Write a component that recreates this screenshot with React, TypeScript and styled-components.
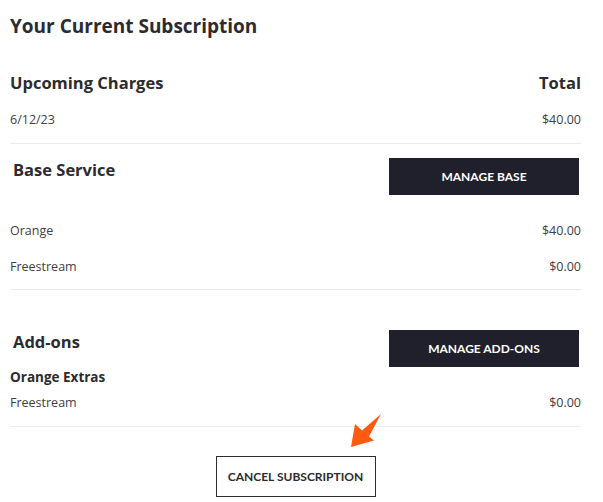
import React from "react";
import styled, { createGlobalStyle } from "styled-components";

const Global = createGlobalStyle`
  html, body { margin: 0; padding: 0; background: #fff; }
  body { font-family: "Open Sans", "Liberation Sans", sans-serif; color: #2b2b30; }
  * { box-sizing: border-box; }
`;

const Page = styled.div`
  width: 603px;
  padding: 11px 22px 0 10px;
  display: flex;
  flex-direction: column;
`;

const Title = styled.h1`
  margin: 0 0 30px;
  font-size: 19px;
  font-weight: 700;
  line-height: 30px;
  color: #2b2b30;
`;

const Section = styled.section<{ $pad?: number }>`
  display: flex;
  flex-direction: column;
  border-bottom: 1px solid #ececec;
  padding-bottom: ${(p) => p.$pad ?? 12}px;
`;

const HeadRow = styled.div<{ $top?: number }>`
  display: flex;
  justify-content: space-between;
  align-items: flex-start;
  margin-top: ${(p) => p.$top ?? 0}px;
`;

const Heading = styled.h2<{ $indent?: boolean }>`
  margin: 0;
  font-size: 16.5px;
  font-weight: 700;
  line-height: 24px;
  padding-left: ${(p) => (p.$indent ? 3 : 0)}px;
  color: #2b2b30;
`;

const SubHeading = styled.h3`
  margin: 0;
  font-size: 13.5px;
  font-weight: 700;
  line-height: 20px;
  color: #2b2b30;
`;

const Row = styled.div<{ $h?: number; $top?: number }>`
  display: flex;
  justify-content: space-between;
  align-items: center;
  height: ${(p) => p.$h ?? 36}px;
  margin-top: ${(p) => p.$top ?? 0}px;
  font-size: 12.5px;
  color: #404045;
`;

const DarkButton = styled.button`
  width: 190px;
  height: 37px;
  margin-right: 2px;
  background: #20202c;
  border: none;
  color: #fff;
  font-family: Lato, "Liberation Sans", sans-serif;
  font-size: 12px;
  font-weight: 700;
  cursor: pointer;
`;

const Footer = styled.div`
  position: relative;
  display: flex;
  justify-content: center;
  padding-top: 29px;
`;

const OutlineButton = styled.button`
  width: 160px;
  height: 41px;
  background: #fff;
  border: 1.5px solid #2b2b30;
  color: #2b2b30;
  font-family: Lato, "Liberation Sans", sans-serif;
  font-size: 12px;
  font-weight: 700;
  cursor: pointer;
`;

const Arrow = styled.svg`
  position: absolute;
  left: 335px;
  top: -17px;
`;

export default function App() {
  return (
    <>
      <Global />
      <Page>
        <Title>Your Current Subscription</Title>

        <Section $pad={6}>
          <HeadRow>
            <Heading>Upcoming Charges</Heading>
            <Heading>Total</Heading>
          </HeadRow>
          <Row $top={6}>
            <span>6/12/23</span>
            <span>$40.00</span>
          </Row>
        </Section>

        <Section $pad={5}>
          <HeadRow $top={14}>
            <Heading $indent>Base Service</Heading>
            <DarkButton>MANAGE BASE</DarkButton>
          </HeadRow>
          <Row $top={17}>
            <span>Orange</span>
            <span>$40.00</span>
          </Row>
          <Row>
            <span>Freestream</span>
            <span>$0.00</span>
          </Row>
        </Section>

        <Section $pad={9}>
          <HeadRow $top={40}>
            <Heading $indent>Add-ons</Heading>
            <DarkButton>MANAGE ADD-ONS</DarkButton>
          </HeadRow>
          <SubHeading>Orange Extras</SubHeading>
          <Row $h={30}>
            <span>Freestream</span>
            <span>$0.00</span>
          </Row>
        </Section>

        <Footer>
          <Arrow width="40" height="40" viewBox="0 0 40 40">
            <path d="M6 37 L10 14 L17 20.5 L36 4 L24 26.5 L29 30.5 Z" fill="#ff5a0f" />
          </Arrow>
          <OutlineButton>CANCEL SUBSCRIPTION</OutlineButton>
        </Footer>
      </Page>
    </>
  );
}
